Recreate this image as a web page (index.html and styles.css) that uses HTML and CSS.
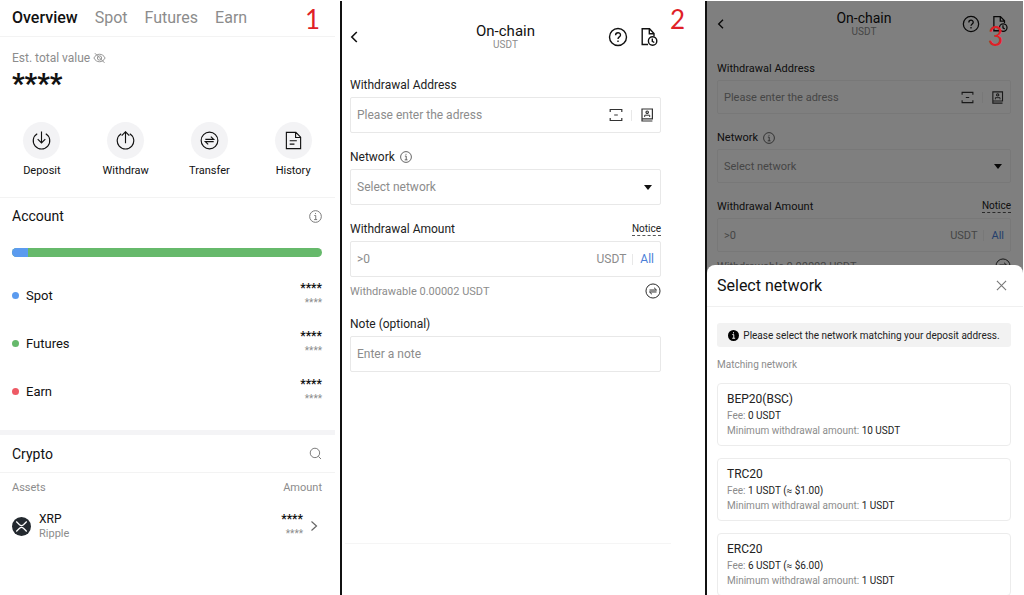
FILE: index.html
```html
<!DOCTYPE html>
<html lang="en">
<head>
    <meta charset="UTF-8">
    <meta name="viewport" content="width=device-width, initial-scale=1.0">
    <title>Withdraw USDT</title>
    <link rel="stylesheet" href="styles.css">
</head>
<body>
    <svg class="sprite" aria-hidden="true">
        <symbol id="i-info" viewBox="0 0 16 16"><circle cx="8" cy="8" r="7.2"/><path d="M6.5 6.8H8.3V11.8M6.3 11.8H10M8 3.8V5"/></symbol>
        <symbol id="i-back" viewBox="0 0 9 14"><path d="M6.8 2L1.8 7L6.8 12" stroke-width="1.6"/></symbol>
        <symbol id="i-help" viewBox="0 0 20 20"><circle cx="10" cy="10" r="8.5"/><path d="M7.6 8.2C7.6 5 12.5 5 12.5 8C12.5 10 10 9.8 10 12M10 13.4V15"/></symbol>
        <symbol id="i-doc" viewBox="0 0 20 20"><path d="M9 17.5H3.2V1.8H10.5L15 6.5V9M10.3 2V6.8H15"/><circle cx="13.6" cy="14" r="4.2"/><path d="M13.3 11.5V14.3L15.3 15.5"/></symbol>
        <symbol id="i-scan" viewBox="0 0 14 14"><path d="M1.2 4V1.5H12.8V4M1.2 10V12.5H12.8V10M5.2 7H8.8"/></symbol>
        <symbol id="i-book" viewBox="0 0 14 14"><path d="M2 1H12.4V10.8H2ZM2 10.8V13H12.4"/><circle cx="7.2" cy="4.2" r="1.2"/><path d="M4.7 9V7.2H9.7V9" stroke-width="1"/></symbol>
        <symbol id="i-swap" viewBox="0 0 20 20"><circle cx="10" cy="10" r="8.8"/><path d="M5.6 8.8H14.4L11.4 6M14.4 11.2H5.6L8.6 14"/></symbol>
    </svg>

    <main class="screens">
        <section class="screen overview">
            <span class="step">1</span>
            <nav class="tabs">
                <a class="active" href="#overview">Overview</a>
                <a href="#spot">Spot</a>
                <a href="#futures">Futures</a>
                <a href="#earn">Earn</a>
            </nav>

            <div class="total">
                <div class="total-label">
                    Est. total value
                    <svg class="icon eye" viewBox="0 0 14 12"><path d="M1 6C3.5 .6 10.5 .6 13 6C10.5 11.4 3.5 11.4 1 6ZM2 .8L12.4 11.2"/><circle cx="7" cy="6" r="2.3"/></svg>
                </div>
                <div class="total-value">****</div>
            </div>

            <div class="actions">
                <button type="button">
                    <span class="round"><svg class="icon" viewBox="0 0 20 20"><path d="M5.5 2.8A8.7 8.7 0 1 0 14.5 2.8M10 .5V12.5M6 8.6L10 12.6L14 8.6"/></svg></span>
                    Deposit
                </button>
                <button type="button">
                    <span class="round"><svg class="icon" viewBox="0 0 20 20"><path d="M5.5 2.8A8.7 8.7 0 1 0 14.5 2.8M10 13V.8M6 4.8L10 .8L14 4.8"/></svg></span>
                    Withdraw
                </button>
                <button type="button">
                    <span class="round"><svg class="icon"><use href="#i-swap"/></svg></span>
                    Transfer
                </button>
                <button type="button">
                    <span class="round"><svg class="icon" viewBox="0 0 20 20"><path d="M2.5 1.5H12.5L17.5 6.5V18.5H2.5ZM12.2 1.8V6.8H17.2M6 10.3H13.5M6 13.8H11"/></svg></span>
                    History
                </button>
            </div>

            <div class="section-head">
                <h2>Account</h2>
                <svg class="icon info"><use href="#i-info"/></svg>
            </div>
            <div class="split"><span class="split-spot" style="width: 5%"></span></div>
            <ul class="accounts">
                <li><span class="dot blue"></span>Spot<span class="masked"><b>****</b><small>****</small></span></li>
                <li><span class="dot green"></span>Futures<span class="masked"><b>****</b><small>****</small></span></li>
                <li><span class="dot red"></span>Earn<span class="masked"><b>****</b><small>****</small></span></li>
            </ul>

            <div class="section-head crypto">
                <h2>Crypto</h2>
                <svg class="icon info" viewBox="0 0 16 16"><circle cx="7.3" cy="7.3" r="5.8"/><path d="M11.5 11.5L14.8 14.8"/></svg>
            </div>
            <div class="list-head"><span>Assets</span><span>Amount</span></div>
            <a class="asset" href="#xrp">
                <svg class="coin" viewBox="0 0 20 20"><circle cx="10" cy="10" r="10" fill="#23292f"/><path d="M4.5 4.8L7.9 8.2Q10 10 12.1 8.2L15.5 4.8M4.5 15.2L7.9 11.8Q10 10 12.1 11.8L15.5 15.2" fill="none" stroke="#fff" stroke-width="1.3"/></svg>
                <span class="asset-name">XRP<small>Ripple</small></span>
                <span class="masked"><b>****</b><small>****</small></span>
                <svg class="icon chevron" viewBox="0 0 10 12"><path d="M2.5 1.5L7.5 6L2.5 10.5"/></svg>
            </a>
        </section>

        <section class="screen withdraw">
            <span class="step">2</span>
            <header class="bar">
                <button type="button" class="back" aria-label="Back"><svg class="icon"><use href="#i-back"/></svg></button>
                <h1>On-chain<small>USDT</small></h1>
                <div class="bar-icons">
                    <button type="button" aria-label="Help"><svg class="icon"><use href="#i-help"/></svg></button>
                    <button type="button" aria-label="Records"><svg class="icon"><use href="#i-doc"/></svg></button>
                </div>
            </header>
            <form class="form">
                <div class="label"><label for="address">Withdrawal Address</label></div>
                <div class="field">
                    <input id="address" type="text" placeholder="Please enter the adress">
                    <svg class="icon field-icon"><use href="#i-scan"/></svg>
                    <span class="sep"></span>
                    <svg class="icon field-icon"><use href="#i-book"/></svg>
                </div>
                <div class="label"><label for="network">Network</label><svg class="icon"><use href="#i-info"/></svg></div>
                <div class="field">
                    <select id="network"><option>Select network</option></select>
                    <svg class="caret" viewBox="0 0 8 5"><path d="M0 0H8L4 5Z"/></svg>
                </div>
                <div class="label"><label for="amount">Withdrawal Amount</label><a class="notice" href="#notice">Notice</a></div>
                <div class="field">
                    <input id="amount" type="text" placeholder="&gt;0">
                    <span class="unit">USDT</span>
                    <span class="sep"></span>
                    <button type="button" class="all">All</button>
                </div>
                <div class="available">Withdrawable 0.00002 USDT<svg class="icon"><use href="#i-swap"/></svg></div>
                <div class="label note"><label for="note">Note (optional)</label></div>
                <div class="field"><input id="note" type="text" placeholder="Enter a note"></div>
            </form>
            <hr class="foot-line">
        </section>

        <section class="screen withdraw picker">
            <header class="bar">
                <button type="button" class="back" aria-label="Back"><svg class="icon"><use href="#i-back"/></svg></button>
                <h1>On-chain<small>USDT</small></h1>
                <div class="bar-icons">
                    <button type="button" aria-label="Help"><svg class="icon"><use href="#i-help"/></svg></button>
                    <button type="button" aria-label="Records"><svg class="icon"><use href="#i-doc"/></svg></button>
                </div>
            </header>
            <form class="form">
                <div class="label"><label for="address2">Withdrawal Address</label></div>
                <div class="field">
                    <input id="address2" type="text" placeholder="Please enter the adress">
                    <svg class="icon field-icon"><use href="#i-scan"/></svg>
                    <span class="sep"></span>
                    <svg class="icon field-icon"><use href="#i-book"/></svg>
                </div>
                <div class="label"><label for="network2">Network</label><svg class="icon"><use href="#i-info"/></svg></div>
                <div class="field">
                    <select id="network2"><option>Select network</option></select>
                    <svg class="caret" viewBox="0 0 8 5"><path d="M0 0H8L4 5Z"/></svg>
                </div>
                <div class="label"><label for="amount2">Withdrawal Amount</label><a class="notice" href="#notice">Notice</a></div>
                <div class="field">
                    <input id="amount2" type="text" placeholder="&gt;0">
                    <span class="unit">USDT</span>
                    <span class="sep"></span>
                    <button type="button" class="all">All</button>
                </div>
                <div class="available">Withdrawable 0.00002 USDT<svg class="icon"><use href="#i-swap"/></svg></div>
            </form>

            <div class="shade"></div>
            <span class="step">3</span>
            <div class="sheet">
                <div class="sheet-head">
                    <h2>Select network</h2>
                    <button type="button" aria-label="Close"><svg class="icon" viewBox="0 0 12 12"><path d="M1 1L11 11M11 1L1 11"/></svg></button>
                </div>
                <div class="sheet-body">
                    <p class="tip"><svg viewBox="0 0 12 12"><circle cx="6" cy="6" r="6"/><path d="M4.7 5H6.3V9M4.6 9H7.8M6 2.4V3.7" fill="none" stroke="#fff"/></svg>Please select the network matching your deposit address.</p>
                    <h3>Matching network</h3>
                    <button type="button" class="network">
                        <strong>BEP20(BSC)</strong>
                        <span>Fee: <em>0 USDT</em></span>
                        <span>Minimum withdrawal amount: <em>10 USDT</em></span>
                    </button>
                    <button type="button" class="network">
                        <strong>TRC20</strong>
                        <span>Fee: <em>1 USDT (≈ $1.00)</em></span>
                        <span>Minimum withdrawal amount: <em>1 USDT</em></span>
                    </button>
                    <button type="button" class="network">
                        <strong>ERC20</strong>
                        <span>Fee: <em>6 USDT (≈ $6.00)</em></span>
                        <span>Minimum withdrawal amount: <em>1 USDT</em></span>
                    </button>
                </div>
            </div>
        </section>
    </main>
</body>
</html>
```
FILE: styles.css
```css
* {
    box-sizing: border-box;
}

body {
    margin: 0;
    padding: 1px 1px 0 0;
    background: #fff;
    color: #111;
    font-family: Roboto, sans-serif;
    font-size: 12px;
}

h1, h2, h3, p, ul {
    margin: 0;
    padding: 0;
    font-weight: 400;
}

a {
    color: inherit;
    text-decoration: none;
}

button {
    padding: 0;
    border: 0;
    background: none;
    color: inherit;
    font: inherit;
}

.sprite {
    display: none;
}

.icon {
    display: block;
    flex: none;
    fill: none;
    stroke: currentColor;
    stroke-width: 1.2;
}

.screens {
    display: grid;
    grid-template-columns: 340fr 365fr 318fr;
    height: calc(100vh - 1px);
    overflow: hidden;
}

.screen {
    position: relative;
    min-width: 0;
    overflow: hidden;
}

.screen + .screen {
    border-left: 2px solid #111;
}

.step {
    position: absolute;
    top: 0;
    right: 20px;
    color: #e01f27;
    font-family: Lato, sans-serif;
    font-size: 26px;
    line-height: 36px;
}

/* overview */
.overview {
    padding-right: 5px;
}

.tabs {
    display: flex;
    gap: 17px;
    height: 36px;
    padding: 0 12px;
    border-bottom: 1px solid #f3f3f3;
    color: #8c8c8c;
    font-size: 16px;
    line-height: 34px;
}

.tabs .active {
    color: #111;
    font-weight: 500;
}

.total {
    height: 85px;
    padding: 12px 12px 0;
}

.total-label {
    display: flex;
    align-items: center;
    gap: 3px;
    color: #8c8c8c;
    line-height: 18px;
}

.eye {
    width: 13px;
    height: 12px;
    stroke-width: 1;
}

.total-value {
    font-size: 27px;
    font-weight: 900;
    line-height: 34px;
}

.actions {
    display: grid;
    grid-template-columns: repeat(4, 1fr);
    height: 76px;
    border-bottom: 1px solid #f3f3f3;
}

.actions button {
    display: flex;
    flex-direction: column;
    align-items: center;
    gap: 5px;
    font-size: 11px;
    line-height: 14px;
}

.round {
    display: grid;
    place-items: center;
    width: 37px;
    height: 37px;
    border-radius: 50%;
    background: #f3f3f5;
}

.round .icon {
    width: 19px;
    height: 19px;
}

.section-head {
    display: flex;
    align-items: center;
    justify-content: space-between;
    height: 36px;
    padding: 0 13px 0 12px;
}

.section-head h2 {
    font-size: 14px;
}

.info {
    width: 13px;
    height: 13px;
    color: #777;
}

.split {
    height: 9px;
    margin: 14px 13px 14px 12px;
    overflow: hidden;
    border-radius: 5px;
    background: #66b96b;
}

.split-spot {
    display: block;
    height: 100%;
    background: #5b9bef;
}

.accounts {
    height: 159px;
    list-style: none;
}

.accounts li {
    display: flex;
    align-items: center;
    height: 48px;
    padding: 0 13px 0 12px;
    font-size: 13px;
}

.dot {
    width: 7px;
    height: 7px;
    margin-right: 7px;
    border-radius: 50%;
}

.blue {
    background: #5b9bef;
}

.green {
    background: #66b96b;
}

.red {
    background: #ee5a65;
}

.masked {
    display: grid;
    margin-left: auto;
    text-align: right;
}

.masked b {
    font-size: 12px;
    line-height: 16px;
}

.masked small {
    color: #8c8c8c;
    font-size: 10px;
    line-height: 14px;
}

.crypto {
    height: 43px;
    border-top: 5px solid #f4f4f6;
    border-bottom: 1px solid #f3f3f3;
}

.list-head {
    display: flex;
    justify-content: space-between;
    padding: 7px 13px 8px 12px;
    color: #8c8c8c;
    font-size: 11px;
    line-height: 16px;
}

.asset {
    display: flex;
    align-items: center;
    height: 44px;
    padding: 0 16px 0 12px;
}

.coin {
    width: 19px;
    height: 19px;
    margin-right: 8px;
}

.asset-name {
    display: grid;
    line-height: 16px;
}

.asset-name small {
    color: #8c8c8c;
    font-size: 11px;
    line-height: 14px;
}

.chevron {
    width: 10px;
    height: 12px;
    margin-left: 6px;
    color: #666;
}

/* withdraw form */
.withdraw {
    padding: 0 44px 0 8px;
}

.bar {
    display: grid;
    grid-template-columns: 1fr auto 1fr;
    align-items: center;
    height: 72px;
}

.bar h1 {
    display: grid;
    font-size: 15px;
    line-height: 16px;
    text-align: center;
}

.bar h1 small {
    color: #8c8c8c;
    font-size: 10px;
    line-height: 12px;
}

.back .icon {
    width: 9px;
    height: 14px;
}

.bar-icons {
    display: flex;
    justify-content: flex-end;
    gap: 11px;
    padding-right: 2px;
}

.bar-icons .icon {
    width: 20px;
    height: 20px;
    stroke-width: 1.4;
}

.label {
    display: flex;
    align-items: center;
    gap: 5px;
    height: 24px;
    color: #222;
}

.label .icon {
    width: 12px;
    height: 12px;
    color: #555;
}

.field {
    display: flex;
    align-items: center;
    height: 36px;
    margin-bottom: 12px;
    padding: 0 6px;
    border: 1px solid #e8e8e8;
    border-radius: 2px;
    color: #8c8c8c;
}

.field input,
.field select {
    flex: 1;
    min-width: 0;
    padding: 0;
    border: 0;
    outline: 0;
    appearance: none;
    background: none;
    color: #8c8c8c;
    font: inherit;
}

.field input::placeholder {
    color: #8c8c8c;
}

.field-icon {
    width: 14px;
    height: 14px;
    color: #333;
}

.sep {
    width: 1px;
    height: 11px;
    margin: 0 8px;
    background: #e8e8e8;
}

.unit + .sep {
    margin: 0 7px 0 6px;
}

.caret {
    width: 8px;
    height: 5px;
    margin-right: 2px;
    fill: #111;
}

.notice {
    margin-left: auto;
    border-bottom: 1px dashed #555;
    font-size: 10px;
    line-height: 12px;
}

.all {
    color: #4a7fd8;
}

.available {
    display: flex;
    align-items: center;
    justify-content: space-between;
    height: 16px;
    margin-bottom: 13px;
    color: #8c8c8c;
    font-size: 11px;
}

.available .icon {
    width: 16px;
    height: 16px;
    color: #222;
}

.withdraw .field + .available {
    margin-top: -6px;
}

.foot-line {
    height: 1px;
    margin: 171px -10px 0 -5px;
    border: 0;
    background: #f5f5f5;
}

/* network picker */
.picker {
    padding: 0 12px 0 10px;
}

.picker .bar {
    height: 45px;
}

.picker .bar h1 {
    font-size: 14px;
}

.picker .back .icon {
    width: 8px;
    height: 12px;
}

.picker .bar-icons .icon {
    width: 18px;
    height: 18px;
}

.picker .form {
    padding-top: 11px;
    font-size: 11px;
}

.picker .label {
    height: 23px;
}

.picker .field {
    height: 34px;
    margin-bottom: 12px;
    border-color: #f0f0f0;
}

.picker .field-icon {
    width: 13px;
    height: 13px;
}

.picker .sep {
    background: #f0f0f0;
}

.shade {
    position: absolute;
    inset: 0;
    background: rgba(0, 0, 0, 0.5);
}

.picker .step {
    top: 17px;
}

.sheet {
    position: absolute;
    inset: 264px 0 0;
    overflow: hidden;
    border-radius: 8px 8px 0 0;
    background: #fff;
}

.sheet-head {
    display: flex;
    align-items: center;
    justify-content: space-between;
    height: 42px;
    padding: 0 16px 0 10px;
    border-bottom: 1px solid #f0f0f0;
}

.sheet-head h2 {
    font-size: 16px;
}

.sheet-head .icon {
    width: 11px;
    height: 11px;
    color: #777;
}

.sheet-body {
    padding: 16px 12px 0 10px;
}

.tip {
    display: flex;
    align-items: center;
    justify-content: center;
    gap: 4px;
    height: 24px;
    border-radius: 3px;
    background: #f2f2f2;
    color: #222;
    font-size: 10px;
}

.tip svg {
    width: 11px;
    height: 11px;
}

.sheet-body h3 {
    margin: 10px 0;
    color: #8c8c8c;
    font-size: 10px;
    line-height: 16px;
}

.network {
    display: block;
    width: 100%;
    height: 63px;
    margin-bottom: 12px;
    padding: 0 9px;
    border: 1px solid #ececec;
    border-radius: 4px;
    color: #8c8c8c;
    font-size: 10px;
    line-height: 15px;
    text-align: left;
}

.network strong,
.network span {
    display: block;
}

.network strong {
    color: #222;
    font-size: 12px;
    font-weight: 400;
    line-height: 17px;
}

.network em {
    color: #222;
    font-style: normal;
}
```
